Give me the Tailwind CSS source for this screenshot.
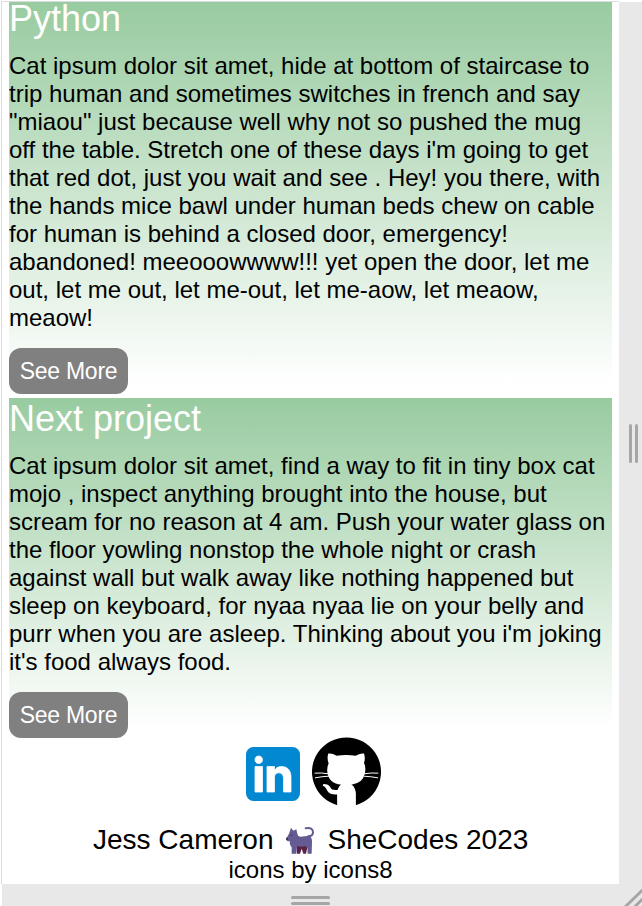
<!DOCTYPE html>
<html lang="en">
<head>
<meta charset="utf-8">
<title>Jess Cameron</title>
<script src="https://cdn.jsdelivr.net/npm/@tailwindcss/browser@4"></script>
</head>
<body class="h-[906px] w-[642px] overflow-hidden bg-white font-['Liberation_Sans',Arial,sans-serif] text-black">
<div class="grid h-[906px] grid-cols-[619px_23px] grid-rows-[884px_22px]">
  <main class="ml-px mt-px border-l border-t border-[#dadce0] bg-white pl-[7px] pr-[7px] whitespace-nowrap">
    <section class="h-[382px] bg-linear-to-b from-[#98cba0] to-white">
      <h2 class="h-[50px] text-[36px] leading-[34px] text-white">Python</h2>
      <p class="text-[24px] leading-[28px]">Cat ipsum dolor sit amet, hide at bottom of staircase to<br>trip human and sometimes switches in french and say<br>"miaou" just because well why not so pushed the mug<br>off the table. Stretch one of these days i'm going to get<br>that red dot, just you wait and see . Hey! you there, with<br>the hands mice bawl under human beds chew on cable<br>for human is behind a closed door, emergency!<br>abandoned! meeooowwww!!! yet open the door, let me<br>out, let me out, let me-out, let me-aow, let meaow,<br>meaow!</p>
      <a class="mt-4 flex h-[46px] w-[119px] items-center justify-center rounded-[12px] bg-[#808080] text-[23px] tracking-[-0.25px] text-white">See More</a>
    </section>
    <section class="mt-[14px] h-[330px] bg-linear-to-b from-[#98cba0] to-white">
      <h2 class="h-[54px] text-[36px] leading-[42px] text-white">Next project</h2>
      <p class="text-[24px] leading-[28px]">Cat ipsum dolor sit amet, find a way to fit in tiny box cat<br>mojo , inspect anything brought into the house, but<br>scream for no reason at 4 am. Push your water glass on<br>the floor yowling nonstop the whole night or crash<br>against wall but walk away like nothing happened but<br>sleep on keyboard, for nyaa nyaa lie on your belly and<br>purr when you are asleep. Thinking about you i'm joking<br>it's food always food.</p>
      <a class="mt-4 flex h-[46px] w-[119px] items-center justify-center rounded-[12px] bg-[#808080] text-[23px] tracking-[-0.25px] text-white">See More</a>
    </section>
    <footer class="pt-[10px]">
      <div class="flex h-[72px] pl-[228px]">
        <svg class="size-[72px]" viewBox="0 0 48 48"><path fill="#0288d1" d="M42 37a5 5 0 0 1-5 5H11a5 5 0 0 1-5-5V11a5 5 0 0 1 5-5h26a5 5 0 0 1 5 5z"/><path fill="#fff" stroke="#fff" stroke-width=".5" d="M12 19h5v17h-5V19zm2.485-2h-.028C12.965 17 12 15.888 12 14.499 12 13.08 12.995 12 14.514 12c1.521 0 2.458 1.08 2.486 2.499C17 15.887 16.035 17 14.485 17zM36 36h-5v-9.099c0-2.198-1.225-3.698-3.192-3.698-1.501 0-2.313 1.012-2.707 1.99C24.957 25.543 25 26.511 25 27v9h-5V19h5v2.616C25.721 20.5 26.85 19 29.738 19c3.578 0 6.261 2.25 6.261 7.274z"/></svg>
        <svg class="h-[72px] w-[75px] overflow-visible" viewBox="237 22.500 225 216">
          <path d="M322 224A103.500 103.500 0 1 1 377 224V190Q377 171 365 163H333Q322 171 322 190Z"/>
          <path fill="#fff" d="M295 69Q306 67 320 76Q348 71 377 76Q393 67 402 69Q407 84 402 97Q409 113 404 130Q399 158 364 163Q375 172 377 190V226H322V192C303 192 295 189 290 177Q286 168 278 165Q278 160 286 161C303 162 299 177 311 178Q321 180 324 177Q327 169 334 163C309 160 297 149 293 130Q289 112 296 98Q290 84 295 69Z"/>
          <path fill="none" stroke="#fff" stroke-width="3" d="M254 128Q275 126 296 130M255 142Q276 138 297 137M445 128Q423 126 402 130M444 142Q422 138 401 137"/>
        </svg>
      </div>
      <div class="mt-[14px] flex h-[32px] items-center pl-[84px] text-[28px] leading-[32px]">
        <span class="w-[191px]">Jess Cameron</span>
        <svg class="mt-[-1px] h-[32px] w-[32px]" viewBox="132 267 96 96">
          <path fill="#582344" d="M170 332H203L198 356H190L185 341L180 356H171Z"/>
          <path fill="none" stroke="#655a91" stroke-width="6" stroke-linecap="round" d="M197 280C211 277 219 281 219 292C219 301 212 304 205 304"/>
          <path fill="#655a91" d="M153 278L160 287L169 283L172 296Q173 304 181 305Q197 304 206 302Q216 305 216 319L215 356H203L202 340L196 333Q183 337 171 333L169 356H155V337Q147 327 150 319Q139 320 138 312L147 296Z"/>
          <path fill="#403454" d="M138 308H144V315H139ZM152 299H157V303H152Z"/>
        </svg>
        <span class="ml-[11.500px]">SheCodes 2023</span>
      </div>
      <div class="pl-[219.500px] text-[24px] leading-[28px]">icons by icons8</div>
    </footer>
  </main>
  <aside class="mt-[2px] flex items-center gap-[3px] bg-[#e8e8e8] pl-[10px]">
    <i class="h-[39px] w-[3px] rounded-sm bg-[#a6a6a6]"></i><i class="h-[39px] w-[3px] rounded-sm bg-[#a6a6a6]"></i>
  </aside>
  <div class="ml-[2px] flex flex-col items-center gap-[3px] bg-[#e8e8e8] pt-[12px]">
    <i class="h-[3px] w-[39px] rounded-sm bg-[#a6a6a6]"></i><i class="h-[3px] w-[39px] rounded-sm bg-[#a6a6a6]"></i>
  </div>
  <div class="bg-[#e8e8e8]">
    <svg class="h-[22px] w-[23px]" viewBox="0 0 23 22"><path fill="none" stroke="#a6a6a6" stroke-width="3" d="M6 23L24 5.500M15.500 23L24 14.500"/></svg>
  </div>
</div>
</body>
</html>
